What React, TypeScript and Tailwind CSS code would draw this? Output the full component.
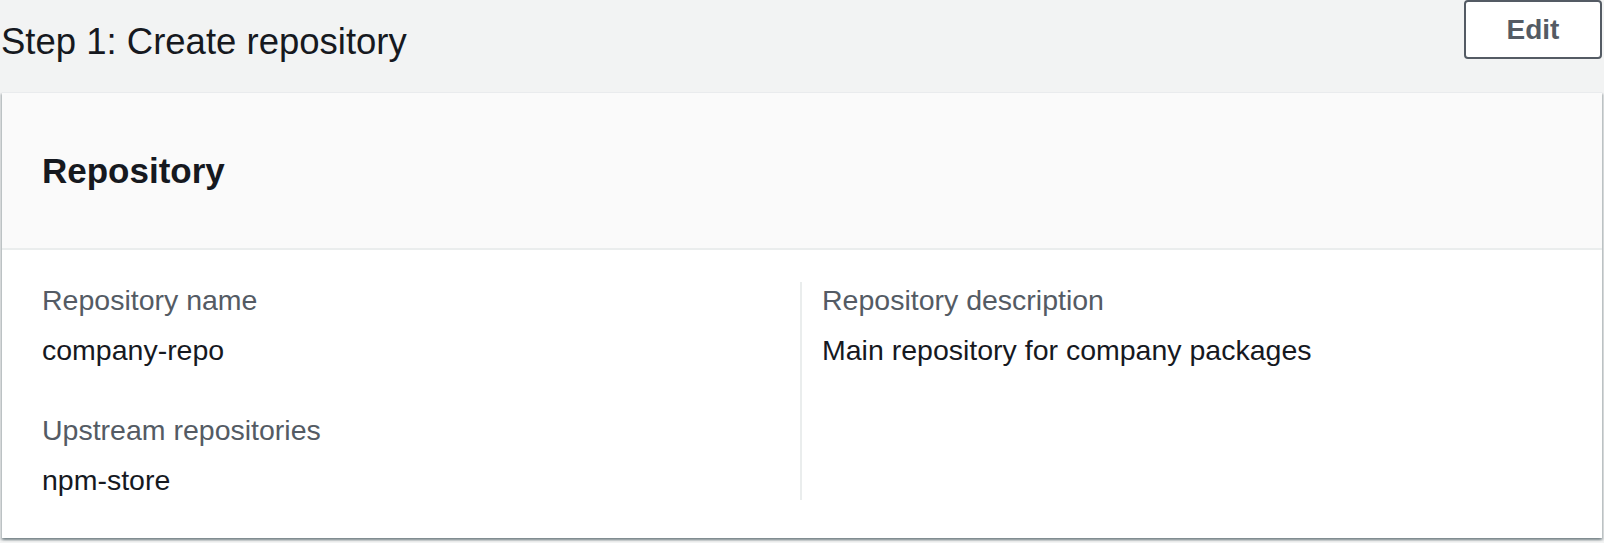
const details = {
    left: [
        { label: 'Repository name', value: 'company-repo' },
        { label: 'Upstream repositories', value: 'npm-store' },
    ],
    right: [{ label: 'Repository description', value: 'Main repository for company packages' }],
};

function KeyValue({ label, value, first }: { label: string; value: string; first: boolean }) {
    return (
        <div className={first ? '' : 'mt-[44px]'}>
            <div className="text-[28.5px] leading-[36px] text-[#545b64]">{label}</div>
            <div className="mt-[14px] text-[28.5px] leading-[36px] text-[#16191f]">{value}</div>
        </div>
    );
}

export default function App() {
    return (
        <div
            className="h-[543px] w-[1604px] overflow-hidden bg-[#f2f3f3]"
            style={{ fontFamily: '"Liberation Sans", Arial, sans-serif' }}
        >
            {/* Step header */}
            <div className="flex h-[92px] items-start justify-between">
                <h2 className="mt-5 pl-[1px] text-[36.5px] leading-[44px] text-[#16191f]">Step 1: Create repository</h2>
                <button className="mr-[2px] h-[59px] w-[138px] rounded-[4px] border-2 border-[#545b64] bg-white text-[28px] font-bold text-[#545b64]">
                    Edit
                </button>
            </div>

            {/* Container */}
            <div className="mx-[2px] border-t border-[#e9ebed] bg-white shadow-[0_2px_2px_0_rgba(0,28,36,0.3),2px_2px_2px_0_rgba(0,28,36,0.15),-2px_2px_2px_0_rgba(0,28,36,0.15)]">
                <div className="flex h-[157px] items-center border-b-2 border-[#eaeded] bg-[#fafafa] px-10">
                    <h3 className="text-[35px] font-bold leading-[44px] text-[#16191f]">Repository</h3>
                </div>
                <div className="grid grid-cols-[758px_1fr] px-10 pb-[38px] pt-[32px]">
                    <div className="pb-[2px] pr-5">
                        {details.left.map((d, i) => (
                            <KeyValue key={d.label} label={d.label} value={d.value} first={i === 0} />
                        ))}
                    </div>
                    <div className="border-l-2 border-[#eaeded] pb-[2px] pl-5">
                        {details.right.map((d, i) => (
                            <KeyValue key={d.label} label={d.label} value={d.value} first={i === 0} />
                        ))}
                    </div>
                </div>
            </div>
        </div>
    );
}
